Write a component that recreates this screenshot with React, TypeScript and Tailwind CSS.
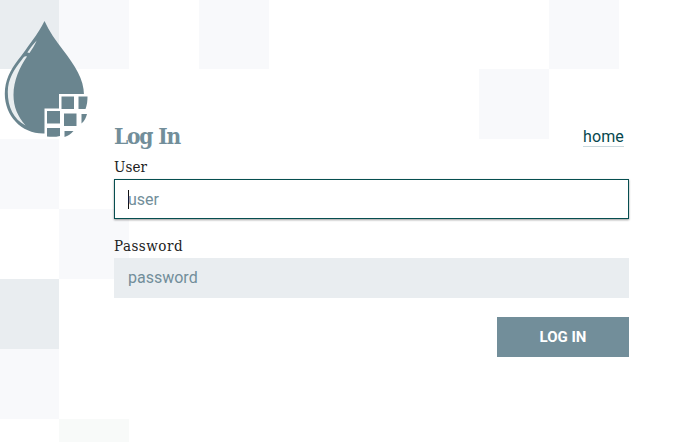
const tiles = [
  'col-start-1 row-start-1 bg-[#e9edf0]',
  'col-start-2 row-start-1 bg-[#f8f9fb]',
  'col-start-4 row-start-1 bg-[#f8f9fb]',
  'col-start-9 row-start-1 bg-[#f8f9fb]',
  'col-start-8 row-start-2 bg-[#f8f9fb]',
  'col-start-1 row-start-3 bg-[#f8f9fb]',
  'col-start-2 row-start-4 bg-[#f8f9fb]',
  'col-start-1 row-start-5 bg-[#e9edf0]',
  'col-start-1 row-start-6 bg-[#f8f9fb]',
  'col-start-2 row-start-7 bg-[#f8faf9]',
];

function Backdrop() {
  return (
    <div
      aria-hidden="true"
      className="col-start-1 row-start-1 grid grid-cols-[59px_repeat(8,70px)_1fr] grid-rows-[69px_repeat(5,70px)_1fr]"
    >
      {tiles.map((tile) => (
        <div key={tile} className={tile} />
      ))}
    </div>
  );
}

function Logo() {
  return (
    <svg className="mt-[18px] ml-1 h-[122px] w-[86px] shrink-0" viewBox="4 18 86 122">
      <path
        d="M44.500 21C49 31 56 41 63 50C75 66 84 79 84 95H60V109H45V133.500C22 134.500 4.800 116 4.800 94C4.800 80 10.500 70 18 60C23.500 53 27.500 47 32 41C37.500 33.500 41 28 44.500 21Z"
        fill="#6a858f"
      />
      <path d="M36.700 40.500C33.500 44 29.800 48.500 27.300 52.500L29.500 53C31.700 49.500 35 45 36.700 40.500Z" fill="#e9eef0" />
      <path d="M27 56.500C24.500 55.500 23.500 57.500 22 59.500C14 69.500 7.800 79 7.800 92C7.800 107 13.500 119 25.500 125.500C17.500 116 13.500 107 13.500 95C13.500 80 20 67 27 56.500Z" fill="#e9eef0" />
      <path d="M59 94H88V139H44.500V108.500H59Z" fill="#fff" />
      <g fill="#6a858f">
        <path d="M61.500 96.500H74V109H61.500Z" />
        <path d="M78.500 96.500H87.500C87.500 101 87 105 85.500 109H78.500Z" />
        <path d="M47 111H60V123.500H47Z" />
        <path d="M64 113.500H76.500V126H64Z" />
        <path d="M81.500 114H87C86 118 84.500 121 81.500 123.500Z" />
        <path d="M47 128H60V136C56 137 51 137 47 136.500Z" />
        <path d="M64.500 131H73.500C71 134 68 136 64.500 137Z" />
      </g>
    </svg>
  );
}

export default function App() {
  return (
    <div className="grid h-[442px] w-full grid-cols-1 grid-rows-1 overflow-hidden bg-white font-['Roboto',sans-serif] text-[16px] text-[#202020]">
      <Backdrop />
      <main className="z-10 col-start-1 row-start-1 flex items-start">
        <Logo />
        <form className="ml-6 flex w-[515px] flex-col pt-[119px]">
          <header className="flex h-9 items-center justify-between pr-[5px]">
            <h1 className="-mt-0.5 font-['Roboto_Slab','DejaVu_Serif_Condensed','DejaVu_Serif',serif] text-[22.5px] leading-8 font-bold tracking-[-1.2px] [font-stretch:condensed] text-[#728e9a]">
              Log In
            </h1>
            <a className="border-b border-[#c9d8dd] leading-[19px] tracking-[0.15px] text-[#07484e]">home</a>
          </header>
          <label htmlFor="user" className="h-6 font-['Roboto_Slab','DejaVu_Serif_Condensed','DejaVu_Serif',serif] text-[15px] leading-6 tracking-[0.1px] [font-stretch:condensed]">
            User
          </label>
          <div className="flex h-10 items-center border border-[#064e50] bg-white pl-[13px] shadow-[0_1px_2px_rgba(0,0,0,0.4)]">
            <span className="-mr-px h-[19px] w-px bg-[#101010]" />
            <input id="user" placeholder="user" className="w-full pt-px outline-none placeholder:text-[#728e9a] placeholder:opacity-100" />
          </div>
          <label htmlFor="password" className="mt-[15px] h-6 font-['Roboto_Slab','DejaVu_Serif_Condensed','DejaVu_Serif',serif] text-[15px] leading-6 tracking-[0.5px] [font-stretch:condensed]">
            Password
          </label>
          <input
            id="password"
            type="password"
            placeholder="password"
            className="h-10 bg-[#e9edf0] px-3.5 pb-px outline-none placeholder:text-[#728e9a] placeholder:opacity-100"
          />
          <button type="button" className="mt-[19px] h-10 w-[132px] self-end bg-[#728e9a] text-[15px] font-bold text-white">
            LOG IN
          </button>
        </form>
      </main>
    </div>
  );
}
